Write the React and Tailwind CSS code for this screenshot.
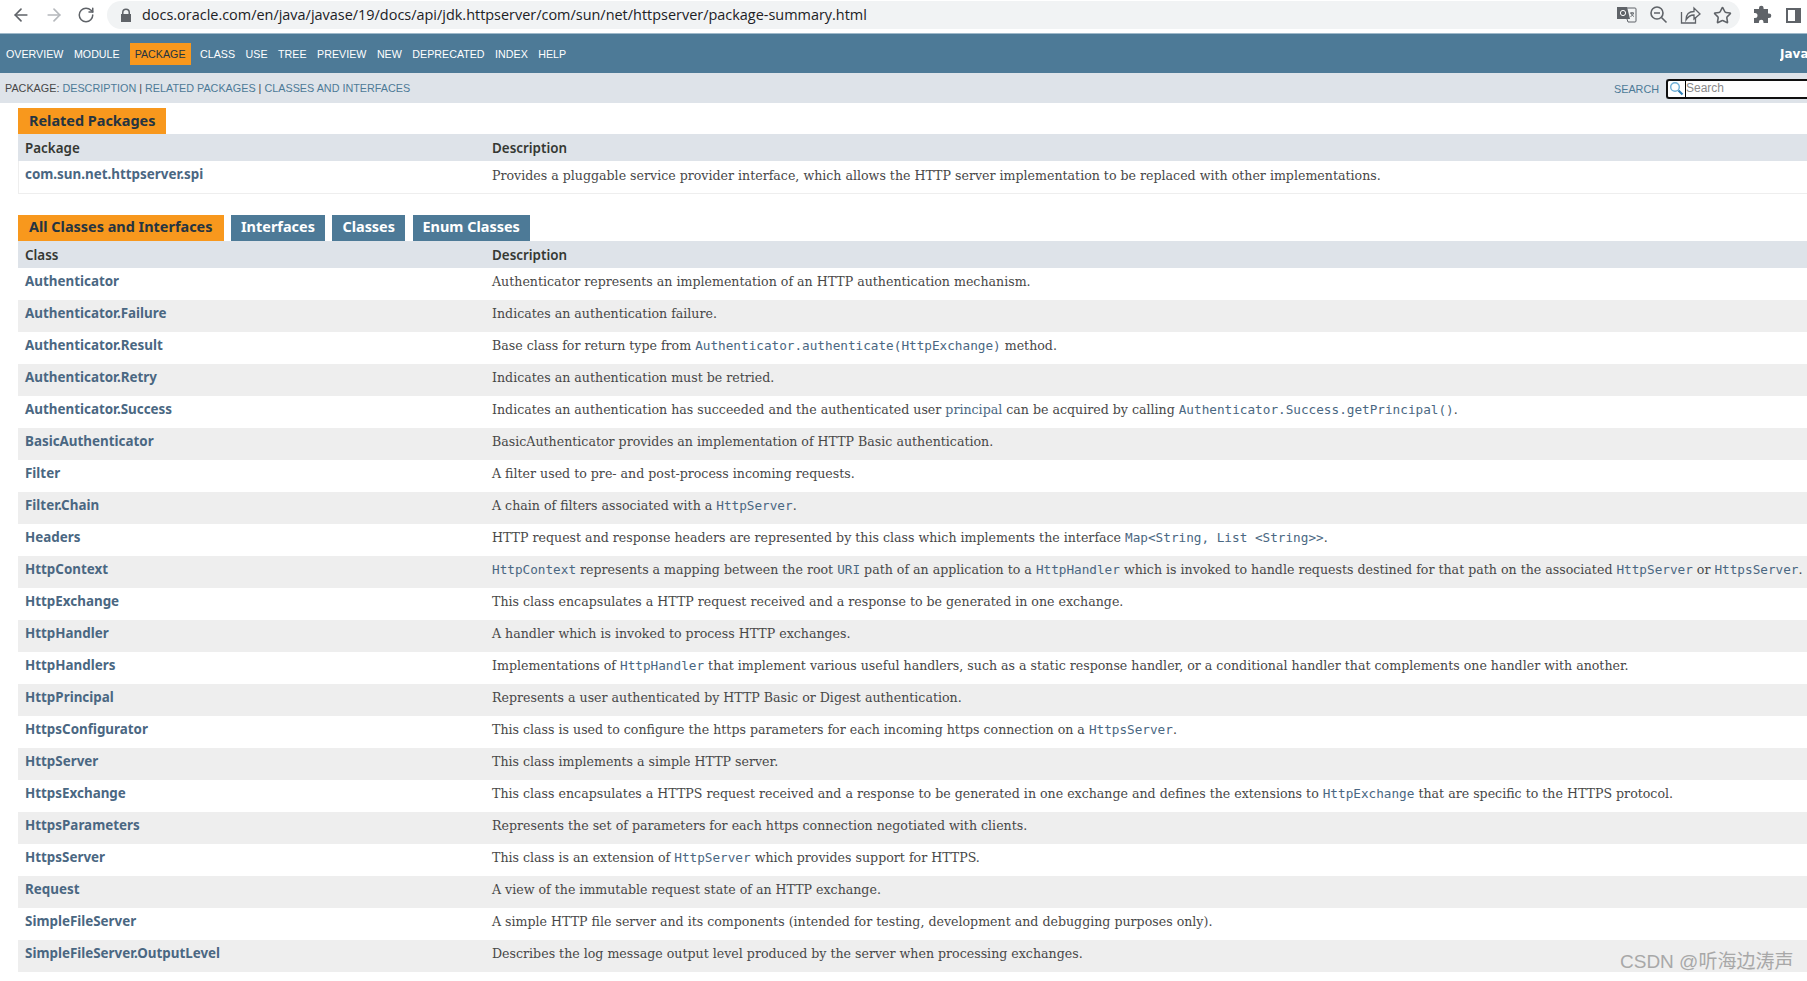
import { ArrowLeft, ArrowRight, RotateCw, Star } from 'lucide-react';

const serif = "font-['DejaVu_Serif',serif]";
const sans = "font-['Noto_Sans',sans-serif]";
const mono = "font-['DejaVu_Sans_Mono',monospace]";

const C = ({ children }) => <code className={`${mono} text-[12.7px] text-[#4A6782]`}>{children}</code>;

const navItems = ['CLASS', 'USE', 'TREE', 'PREVIEW', 'NEW', 'DEPRECATED', 'INDEX', 'HELP'];

const rows = [
    ['Authenticator', <>Authenticator represents an implementation of an HTTP authentication mechanism.</>],
    ['Authenticator.Failure', <>Indicates an authentication failure.</>],
    ['Authenticator.Result', <>Base class for return type from <C>Authenticator.authenticate(HttpExchange)</C> method.</>],
    ['Authenticator.Retry', <>Indicates an authentication must be retried.</>],
    ['Authenticator.Success', <>Indicates an authentication has succeeded and the authenticated user <span className="text-[#4A6782]">principal</span> can be acquired by calling <C>Authenticator.Success.getPrincipal()</C>.</>],
    ['BasicAuthenticator', <>BasicAuthenticator provides an implementation of HTTP Basic authentication.</>],
    ['Filter', <>A filter used to pre- and post-process incoming requests.</>],
    ['Filter.Chain', <>A chain of filters associated with a <C>HttpServer</C>.</>],
    ['Headers', <>HTTP request and response headers are represented by this class which implements the interface <C>Map&lt;String, List &lt;String&gt;&gt;</C>.</>],
    ['HttpContext', <><C>HttpContext</C> represents a mapping between the root <C>URI</C> path of an application to a <C>HttpHandler</C> which is invoked to handle requests destined for that path on the associated <C>HttpServer</C> or <C>HttpsServer</C>.</>],
    ['HttpExchange', <>This class encapsulates a HTTP request received and a response to be generated in one exchange.</>],
    ['HttpHandler', <>A handler which is invoked to process HTTP exchanges.</>],
    ['HttpHandlers', <>Implementations of <C>HttpHandler</C> that implement various useful handlers, such as a static response handler, or a conditional handler that complements one handler with another.</>],
    ['HttpPrincipal', <>Represents a user authenticated by HTTP Basic or Digest authentication.</>],
    ['HttpsConfigurator', <>This class is used to configure the https parameters for each incoming https connection on a <C>HttpsServer</C>.</>],
    ['HttpServer', <>This class implements a simple HTTP server.</>],
    ['HttpsExchange', <>This class encapsulates a HTTPS request received and a response to be generated in one exchange and defines the extensions to <C>HttpExchange</C> that are specific to the HTTPS protocol.</>],
    ['HttpsParameters', <>Represents the set of parameters for each https connection negotiated with clients.</>],
    ['HttpsServer', <>This class is an extension of <C>HttpServer</C> which provides support for HTTPS.</>],
    ['Request', <>A view of the immutable request state of an HTTP exchange.</>],
    ['SimpleFileServer', <>A simple HTTP file server and its components (intended for testing, development and debugging purposes only).</>],
    ['SimpleFileServer.OutputLevel', <>Describes the log message output level produced by the server when processing exchanges.</>],
];

const Row = ({ name, desc, alt }) => (
    <div className={`flex h-8 ${alt ? 'bg-[#EEEEEE]' : 'bg-white'}`}>
        <div className={`${sans} w-[467px] shrink-0 pl-[7px] pt-[4px] text-[13.4px] font-bold leading-[18px] text-[#4A6782]`}>{name}</div>
        <div className={`${serif} whitespace-nowrap pl-[7px] pt-[5px] text-[12.6px] leading-[18px] text-[#474747]`}>{desc}</div>
    </div>
);

const Head = ({ left }) => (
    <div className={`${sans} flex w-full text-[13.4px] font-semibold leading-[18px] text-[#353833]`}>
        <div className="w-[467px] shrink-0 pl-[7px]">{left}</div>
        <div className="pl-[7px]">Description</div>
    </div>
);

const Tab = ({ children, active }) => (
    <div className={`${sans} h-[26px] pt-[3px] text-[14.45px] font-bold leading-[18px] ${active ? 'bg-[#F8981D] px-[11px] text-[#253441]' : 'bg-[#4D7A97] px-[10px] text-white'}`}>{children}</div>
);

export default function App() {
    return (
        <div className="relative h-[981px] w-[1807px] overflow-hidden bg-white">
            <div className="flex h-[33px] items-center bg-white pb-[3px] text-[#5F6368]">
                <ArrowLeft size={20} strokeWidth={2} className="ml-[11px] shrink-0" />
                <ArrowRight size={20} strokeWidth={2} className="ml-[13px] shrink-0 text-[#B5B8BC]" />
                <RotateCw size={18} strokeWidth={2} className="ml-[13px] shrink-0" />
                <div className="ml-[12px] flex h-[28px] w-[1633px] shrink-0 items-center rounded-full bg-[#F1F3F4] pl-[13px]">
                    <svg width="12" height="14" viewBox="0 0 12 14" className="shrink-0" fill="#5F6368">
                        <path d="M2 6V4.500a4 4 0 0 1 8 0V6h1v8H1V6zm1.500 0h5V4.500a2.500 2.500 0 0 0-5 0z" fillRule="evenodd" />
                    </svg>
                    <span className="ml-[10px] font-['Open_Sans',sans-serif] text-[14.45px] text-[#202124]">
                        docs.oracle.com/en/java/javase/19/docs/api/jdk.httpserver/com/sun/net/httpserver/package-summary.html
                    </span>
                    <div className="ml-auto mr-[7px] flex items-center gap-[11px]">
                        <svg width="21" height="20" viewBox="0 0 21 20">
                            <path d="M8 3h11a1 1 0 0 1 1 1v12a1 1 0 0 1-1 1h-7l-1-3z" fill="none" stroke="#5F6368" />
                            <path d="M1 2h10l3 12H1z" fill="#5F6368" />
                            <circle cx="7" cy="8" r="2.600" fill="none" stroke="#fff" />
                            <path d="M14 8h4M16 7v1M15 8c.6 2 2 3 3 3.500M17.500 8c-.5 2-1.800 3-3 3.500" fill="none" stroke="#5F6368" />
                        </svg>
                        <svg width="21" height="20" viewBox="0 0 21 20" fill="none" stroke="#5F6368" strokeWidth="1.600">
                            <circle cx="9" cy="8" r="6" />
                            <path d="M6 8h6M13.500 12.500l5 5" />
                        </svg>
                        <svg width="21" height="20" viewBox="0 0 21 20" fill="none" stroke="#5F6368" strokeWidth="1.300">
                            <path d="M1.500 7v11h14v-6" />
                            <path d="M6 15c0-6 3-8.500 8-8.500V3l6 6-6 5v-4c-4 0-6 1.500-8 5z" />
                        </svg>
                        <div className="flex w-[21px] justify-center"><Star size={19} strokeWidth={2} /></div>
                    </div>
                </div>
                <svg width="20" height="20" viewBox="0 0 20 20" className="ml-[13px] shrink-0" fill="#5F6368">
                    <path d="M1 8V4h5V3a2.300 2.300 0 0 1 4.600 0v1h4.400v4.400h1a2.300 2.300 0 0 1 0 4.600h-1v5H10.500v-1a2.300 2.300 0 0 0-4.600 0v1H1v-5h1a2.300 2.300 0 0 0 0-5z" />
                </svg>
                <svg width="15" height="15" viewBox="0 0 15 15" className="ml-[13px] shrink-0">
                    <rect x="1" y="1" width="13" height="13" fill="none" stroke="#5F6368" strokeWidth="2" />
                    <rect x="9" y="1" width="5" height="13" fill="#5F6368" />
                </svg>
            </div>

            <div className="flex h-[40px] items-center border-t border-[#9FB9CA] bg-[#4D7A97] pl-[6px] pt-[1px] font-['Liberation_Sans',sans-serif] text-[10.7px] text-white">
                <span>OVERVIEW</span>
                <span className="ml-[10.5px]">MODULE</span>
                <span className="ml-[10px] bg-[#F8981D] px-[5px] py-[4px] leading-[14px] text-[#253441]">PACKAGE</span>
                <div className="ml-[9.5px] flex gap-[10.5px]">
                    {navItems.map((item) => <span key={item}>{item}</span>)}
                </div>
                <span className="ml-auto w-[27px] overflow-hidden font-['DejaVu_Sans',sans-serif] text-[12px] font-bold">Java</span>
            </div>

            <div className="flex h-[30px] items-center bg-[#DEE3E9] pl-[5px] font-['Liberation_Sans',sans-serif] text-[10.8px] text-[#4D7A97]">
                <span className="text-[#474747]">PACKAGE:&nbsp;</span>
                <span>DESCRIPTION</span>
                <span className="text-[#474747]">&nbsp;|&nbsp;</span>
                <span>RELATED PACKAGES</span>
                <span className="text-[#474747]">&nbsp;|&nbsp;</span>
                <span>CLASSES AND INTERFACES</span>
                <span className="ml-auto pt-[2px]">SEARCH</span>
                <div className="ml-[7px] mt-[1px] flex h-[20px] w-[141px] items-center rounded-l-[3px] border-y-2 border-l-2 border-[#101010] bg-white">
                    <svg width="15" height="15" viewBox="0 0 15 15" className="ml-[1px] shrink-0" fill="none">
                        <circle cx="6" cy="6" r="4.300" stroke="#6FAFD6" strokeWidth="1.400" />
                        <path d="M9.500 9.500l4 4" stroke="#2F7FB5" strokeWidth="2.200" />
                    </svg>
                    <span className="ml-[1px] h-[16px] w-px bg-black" />
                    <span className="mb-[2px] text-[12px] leading-[14px] text-[#8A8A8A]">Search</span>
                </div>
            </div>

            <div className="ml-[18px]">
                <div className="mt-[5px] flex">
                    <div className={`${sans} h-[26px] bg-[#F8981D] px-[11px] pt-[4px] text-[14.45px] font-bold leading-[18px] text-[#253441]`}>Related Packages</div>
                </div>
                <div className="flex h-[27px] items-center bg-[#DEE3E9]">
                    <Head left="Package" />
                </div>
                <div className="h-[33px] border-b border-l border-[#EEEEEE]">
                    <div className="flex h-8 bg-white">
                        <div className={`${sans} w-[466px] shrink-0 pl-[6px] pt-[4px] text-[13.4px] font-bold leading-[18px] text-[#4A6782]`}>com.sun.net.httpserver.spi</div>
                        <div className={`${serif} whitespace-nowrap pl-[7px] pt-[6px] text-[12.6px] leading-[18px] text-[#474747]`}>Provides a pluggable service provider interface, which allows the HTTP server implementation to be replaced with other implementations.</div>
                    </div>
                </div>

                <div className="mt-[21px] flex gap-[7.5px]">
                    <Tab active>All Classes and Interfaces</Tab>
                    <Tab>Interfaces</Tab>
                    <Tab>Classes</Tab>
                    <Tab>Enum Classes</Tab>
                </div>
                <div className="flex h-[27px] items-center bg-[#DEE3E9]">
                    <Head left="Class" />
                </div>
                {rows.map(([name, desc], i) => <Row key={name} name={name} desc={desc} alt={i % 2 === 1} />)}
            </div>

            <div className="absolute left-[1620px] top-[950px] font-['Liberation_Sans','Noto_Sans_CJK_SC',sans-serif] text-[19px] leading-[24px] text-[#A8A8A8]">CSDN @听海边涛声</div>
        </div>
    );
}
